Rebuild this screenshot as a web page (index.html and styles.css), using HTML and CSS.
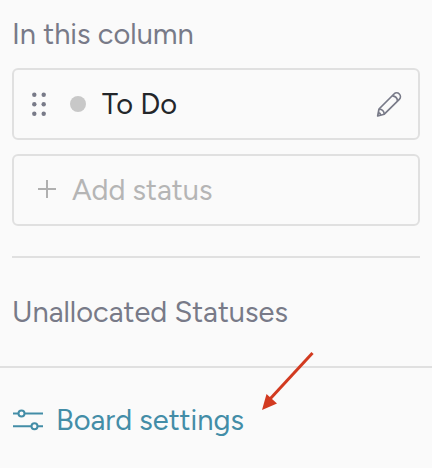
FILE: index.html
```html
<!DOCTYPE html>
<html lang="en">
<head>
<meta charset="utf-8">
<meta name="viewport" content="width=device-width, initial-scale=1">
<title>Column statuses</title>
<link rel="stylesheet" href="styles.css">
</head>
<body>
<main class="panel">
  <section class="section">
    <h2 class="heading">In this column</h2>
    <div class="card">
      <svg class="grip" viewBox="0 0 18 24" aria-hidden="true">
        <circle cx="4.300" cy="2.800" r="2.200"/><circle cx="13.700" cy="2.800" r="2.200"/>
        <circle cx="4.300" cy="12.300" r="2.200"/><circle cx="13.700" cy="12.300" r="2.200"/>
        <circle cx="4.300" cy="21.700" r="2.200"/><circle cx="13.700" cy="21.700" r="2.200"/>
      </svg>
      <span class="dot"></span>
      <span class="status">To Do</span>
      <button class="edit" type="button" aria-label="Edit status">
        <svg class="pencil" viewBox="0 0 26 26" aria-hidden="true">
          <path d="M1.700 25 3 18 18 3a3.700 3.700 0 0 1 5.300 5.300L8.300 23.200Z"/>
          <path d="M16.300 4.800c2.800.2 5 2.300 5.200 5.200M3 18c2.900.2 5 2.200 5.300 5.200M2.300 21.700c1.300.2 2.200 1.100 2.500 2.500"/>
        </svg>
      </button>
    </div>
    <button class="card add" type="button">
      <svg class="plus" viewBox="0 0 18 20" aria-hidden="true"><path d="M9 0v18M0 9h18"/></svg>
      <span>Add status</span>
    </button>
  </section>
  <section class="section unallocated">
    <h2 class="heading">Unallocated Statuses</h2>
  </section>
</main>
<footer class="footer">
  <a class="settings" href="#settings">
    <svg class="sliders" viewBox="-1 0 32 22" aria-hidden="true">
      <path d="M0 4.500h5M12 4.500h18M0 17.300h18M25 17.300h5"/>
      <circle cx="8.500" cy="4.500" r="3"/><circle cx="21.500" cy="17.300" r="3"/>
    </svg>
    <span>Board settings</span>
  </a>
  <svg class="arrow" viewBox="0 0 54 60" aria-hidden="true">
    <path class="shaft" d="M51.500 2 9 48"/>
    <path class="head" d="M1 59 5.500 43 16 52.500Z"/>
  </svg>
</footer>
</body>
</html>
```
FILE: styles.css
```css
* {
  box-sizing: border-box;
}

body {
  margin: 0;
  background: #fafafa;
  color: #23262a;
  font: 29px/36px Figtree, "Noto Sans", sans-serif;
}

.panel {
  padding: 16px 12px 36px;
}

.heading {
  margin: 0;
  color: #787a88;
  font-size: 29px;
  font-weight: 400;
}

.card {
  display: flex;
  align-items: center;
  width: 100%;
  height: 72px;
  margin-top: 14px;
  padding: 0 16px;
  border: 2px solid #e0e0e0;
  border-radius: 6px;
  background: transparent;
}

.heading + .card {
  margin-top: 16px;
}

.grip {
  width: 18px;
  height: 24px;
  fill: #787a88;
}

.dot {
  width: 16px;
  height: 16px;
  margin: 0 16px 0 22px;
  border-radius: 50%;
  background: #c8c8c8;
}

.edit {
  display: flex;
  margin-left: auto;
  padding: 0;
  border: 0;
  background: none;
}

.pencil {
  width: 26px;
  height: 26px;
  fill: none;
  stroke: #787a88;
  stroke-width: 1.7;
  stroke-linejoin: round;
}

.add {
  gap: 16px;
  padding-left: 24px;
  color: #b5b5b5;
  font: inherit;
}

.plus {
  width: 18px;
  height: 20px;
  fill: none;
  stroke: #b0b0b0;
  stroke-width: 2;
}

.unallocated {
  margin-top: 30px;
  padding-top: 36px;
  border-top: 2px solid #e0e0e0;
}

.footer {
  position: relative;
  padding: 34px 12px 30px;
  border-top: 2px solid #e0e0e0;
}

.settings {
  display: inline-flex;
  align-items: center;
  gap: 12px;
  color: #438da7;
  text-decoration: none;
}

.sliders {
  width: 32px;
  height: 22px;
  fill: none;
  stroke: #438da7;
  stroke-width: 2;
}

.arrow {
  position: absolute;
  top: -17px;
  left: 261px;
  width: 54px;
  height: 60px;
}

.shaft {
  fill: none;
  stroke: #d23a20;
  stroke-width: 3;
}

.head {
  fill: #d23a20;
}
```
